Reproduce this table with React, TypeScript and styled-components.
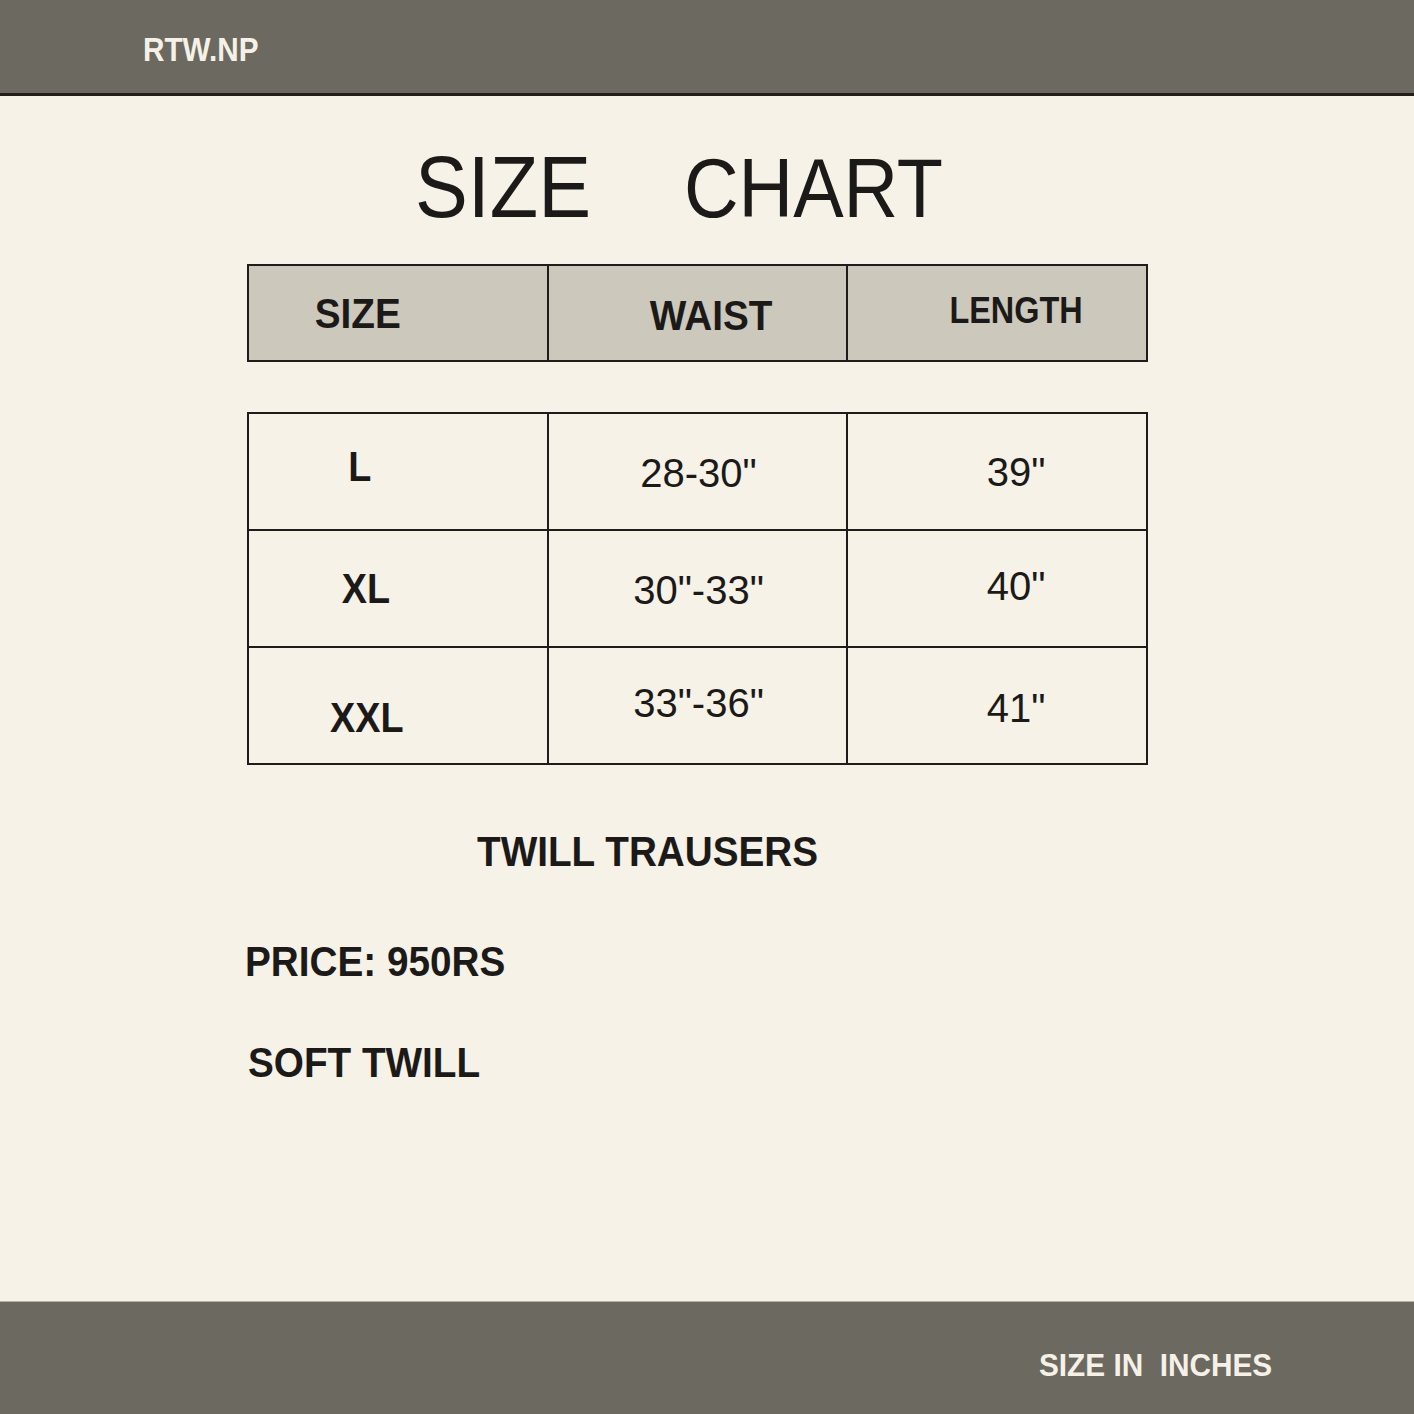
import React from "react";
import styled, { createGlobalStyle } from "styled-components";

const GlobalStyle = createGlobalStyle`
  html, body {
    margin: 0;
    padding: 0;
    background: #f6f2e8;
  }
  body {
    font-family: "Liberation Sans", Arial, sans-serif;
    color: #1c1a18;
  }
`;

const Page = styled.div`
  min-height: 100vh;
  display: flex;
  flex-direction: column;
  background: #f6f2e8;
`;

const TopBar = styled.header`
  height: 96px;
  padding: 33px 0 0 143px;
  box-sizing: border-box;
  background: #6c6961;
  border-bottom: 3px solid #241e1b;
`;

const Brand = styled.div`
  display: inline-block;
  font-size: 33px;
  font-weight: 700;
  line-height: 1;
  color: #f6f1e7;
  transform: scaleX(0.9);
  transform-origin: left center;
`;

const Main = styled.main`
  flex: 1;
  width: 901px;
  padding-left: 247px;
  display: flex;
  flex-direction: column;
`;

const TitleRow = styled.h1`
  margin: 47px 0 0;
  padding-left: 168px;
  display: flex;
  align-items: baseline;
  gap: 73px;
  font-weight: 400;
  line-height: 1;
`;

const TitleWord = styled.span<{ $size: number }>`
  display: inline-block;
  font-size: ${(p) => p.$size}px;
  transform: scaleX(0.9);
  transform-origin: left center;
`;

const Grid = styled.div<{ $rowHeight: number; $rows: number }>`
  display: grid;
  grid-template-columns: repeat(3, 1fr);
  grid-template-rows: repeat(${(p) => p.$rows}, ${(p) => p.$rowHeight}px);
  gap: 2px;
  padding: 2px;
  background: #1f1d1b;
`;

const HeadGrid = styled(Grid)`
  margin-top: 33px;
`;

const BodyGrid = styled(Grid)`
  margin-top: 50px;
`;

const Cell = styled.div<{ $dx: number; $dy: number; $head?: boolean }>`
  display: flex;
  align-items: center;
  justify-content: center;
  background: ${(p) => (p.$head ? "#cdc8bc" : "#f6f2e8")};
  padding-left: ${(p) => Math.max(0, p.$dx * 2)}px;
  padding-right: ${(p) => Math.max(0, -p.$dx * 2)}px;
  padding-top: ${(p) => Math.max(0, p.$dy * 2)}px;
  padding-bottom: ${(p) => Math.max(0, -p.$dy * 2)}px;
`;

const HeadText = styled.span<{ $size: number }>`
  display: inline-block;
  font-size: ${(p) => p.$size}px;
  font-weight: 700;
  line-height: 1;
  white-space: nowrap;
  transform: scaleX(0.9);
`;

const ValueText = styled.span`
  font-size: 40px;
  font-weight: 400;
  line-height: 1;
  white-space: nowrap;
`;

const Note = styled.p<{ $top: number; $left: number }>`
  margin: ${(p) => p.$top}px 0 0 ${(p) => p.$left}px;
  font-size: 43px;
  font-weight: 700;
  line-height: 1;
  white-space: nowrap;
  transform: scaleX(0.9);
  transform-origin: left center;
`;

const BottomBar = styled.footer`
  height: 113px;
  box-sizing: border-box;
  padding: 48px 0 0 1039px;
  background: #6c6961;
  border-top: 1px solid #b9b3a7;
`;

const Units = styled.div`
  display: inline-block;
  font-size: 31px;
  font-weight: 700;
  line-height: 1;
  color: #f6f1e7;
  white-space: pre;
  transform: scaleX(0.96);
  transform-origin: left center;
`;

const headers = [
  { label: "SIZE", size: 43, dx: -40, dy: 0 },
  { label: "WAIST", size: 43, dx: 14, dy: 2 },
  { label: "LENGTH", size: 36, dx: 19, dy: -2 },
];

const rows = [
  { size: "L", dy: [-5, 1, 0], waist: '28-30"', length: '39"' },
  { size: "XL", dy: [0, 1, -3], waist: '30"-33"', length: '40"' },
  { size: "XXL", dy: [12, -3, 2], waist: '33"-36"', length: '41"' },
];

const sizeDx: Record<string, number> = { L: -38, XL: -32, XXL: -31 };

export default function App() {
  return (
    <Page>
      <GlobalStyle />
      <TopBar>
        <Brand>RTW.NP</Brand>
      </TopBar>
      <Main>
        <TitleRow>
          <TitleWord $size={88}>SIZE</TitleWord>
          <TitleWord $size={84}>CHART</TitleWord>
        </TitleRow>

        <HeadGrid $rows={1} $rowHeight={94}>
          {headers.map((h) => (
            <Cell key={h.label} $head $dx={h.dx} $dy={h.dy}>
              <HeadText $size={h.size}>{h.label}</HeadText>
            </Cell>
          ))}
        </HeadGrid>

        <BodyGrid $rows={3} $rowHeight={115}>
          {rows.map((r) => (
            <React.Fragment key={r.size}>
              <Cell $dx={sizeDx[r.size]} $dy={r.dy[0]}>
                <HeadText $size={42}>{r.size}</HeadText>
              </Cell>
              <Cell $dx={1} $dy={r.dy[1]}>
                <ValueText>{r.waist}</ValueText>
              </Cell>
              <Cell $dx={19} $dy={r.dy[2]}>
                <ValueText>{r.length}</ValueText>
              </Cell>
            </React.Fragment>
          ))}
        </BodyGrid>

        <Note $top={65} $left={230}>TWILL TRAUSERS</Note>
        <Note $top={67} $left={-2}>PRICE: 950RS</Note>
        <Note $top={58} $left={1}>SOFT TWILL</Note>
      </Main>
      <BottomBar>
        <Units>{"SIZE IN  INCHES"}</Units>
      </BottomBar>
    </Page>
  );
}
